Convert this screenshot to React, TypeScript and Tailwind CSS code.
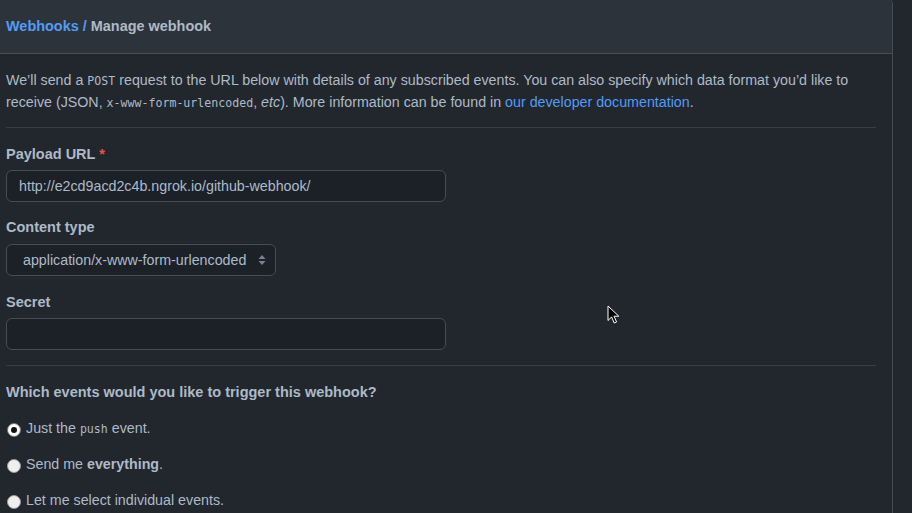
import * as React from 'react';

// ═══════════════════════════════════════════════════════════════════════════════
// SMALL PIECES
// ═══════════════════════════════════════════════════════════════════════════════

function Code({ children }: { children: React.ReactNode }) {
  return (
    <code className="font-['DejaVu_Sans_Mono','Liberation_Mono',monospace] text-[11.6px] leading-[0]">{children}</code>
  );
}

function Label({ children }: { children: React.ReactNode }) {
  return <div className="text-[14.5px] font-bold">{children}</div>;
}

function Radio({ checked = false }: { checked?: boolean }) {
  return checked ? (
    <span className="flex h-[14px] w-[14px] shrink-0 items-center justify-center rounded-full border border-[#767676] bg-white">
      <span className="h-[6px] w-[6px] rounded-full bg-[#111]" />
    </span>
  ) : (
    <span className="block h-[14px] w-[14px] shrink-0 rounded-full border border-[#9a9a9a] bg-[#efefef]" />
  );
}

function RadioRow({ checked, children }: { checked?: boolean; children: React.ReactNode }) {
  return (
    <div className="my-[15px] flex items-center gap-[5px] pl-[1px]">
      <span className="flex pt-[2px]">
        <Radio checked={checked} />
      </span>
      <span>{children}</span>
    </div>
  );
}

function Cursor() {
  return (
    <svg className="absolute left-[607px] top-[305px]" width="14" height="20" viewBox="0 0 14 20">
      <path
        d="M1 1 L1 15.5 L4.6 12 L7.2 18 L9.6 17 L7 11.2 L11.8 11.2 Z"
        fill="#000"
        stroke="#fff"
        strokeWidth="1"
        strokeLinejoin="round"
      />
    </svg>
  );
}

// ═══════════════════════════════════════════════════════════════════════════════
// PAGE
// ═══════════════════════════════════════════════════════════════════════════════

export default function App() {
  return (
    <div className="relative h-[513px] w-full overflow-hidden bg-[#22272e] font-['Liberation_Sans',Arial,sans-serif] text-[14.25px] leading-[21px] text-[#adbac7]">
      <div className="-ml-[11px] -mt-[2px] w-[904px] rounded-t-md border border-[#444c56]">
        {/* Header */}
        <div className="rounded-t-md border-b border-[#444c56] bg-[#2d333b] px-4 pb-4 pt-[17px] text-[14.45px] font-bold">
          <span className="text-[#539bf5]">Webhooks</span>
          <span className="text-[#539bf5]"> / </span>
          <span>Manage webhook</span>
        </div>

        {/* Body */}
        <div className="px-4 pt-[15px]">
          <p className="mb-[14px] leading-[22px]">
            We’ll send a <Code>POST</Code> request to the URL below with details of any subscribed events. You can
            also specify which data format you’d like to receive (JSON, <Code>x-www-form-urlencoded</Code>,{' '}
            <em>etc</em>). More information can be found in{' '}
            <a className="text-[#539bf5]">our developer documentation</a>.
          </p>

          <div className="border-t border-[#373e47]" />

          <div className="mb-[15px] mt-[16px]">
            <Label>
              Payload URL <span className="text-[#e5534b]">*</span>
            </Label>
            <div className="mt-[5px] flex h-[32px] w-[440px] items-center rounded-md border border-[#444c56] bg-[#1c2128] px-3">
              http://e2cd9acd2c4b.ngrok.io/github-webhook/
            </div>
          </div>

          <div className="my-[15px]">
            <Label>Content type</Label>
            <div className="mt-[6px] flex h-[32px] w-[270px] items-center justify-between rounded-md border border-[#444c56] bg-[#1c2128] pl-[16px] pr-[8px]">
              <span>application/x-www-form-urlencoded</span>
              <svg width="10" height="14" viewBox="0 0 10 14">
                <path d="M5 2 L8.5 6 L1.5 6 Z M5 12 L8.5 8 L1.5 8 Z" fill="#768390" />
              </svg>
            </div>
          </div>

          <div className="mb-[15px] mt-[16px]">
            <Label>Secret</Label>
            <div className="mt-[5px] h-[32px] w-[440px] rounded-md border border-[#444c56] bg-[#1c2128]" />
          </div>

          <div className="border-t border-[#373e47]" />

          <div className="mt-[16px] text-[14.5px] font-bold">Which events would you like to trigger this webhook?</div>

          <RadioRow checked>
            Just the <Code>push</Code> event.
          </RadioRow>
          <RadioRow>
            Send me <strong>everything</strong>.
          </RadioRow>
          <RadioRow>Let me select individual events.</RadioRow>
        </div>
      </div>

      <Cursor />
    </div>
  );
}
